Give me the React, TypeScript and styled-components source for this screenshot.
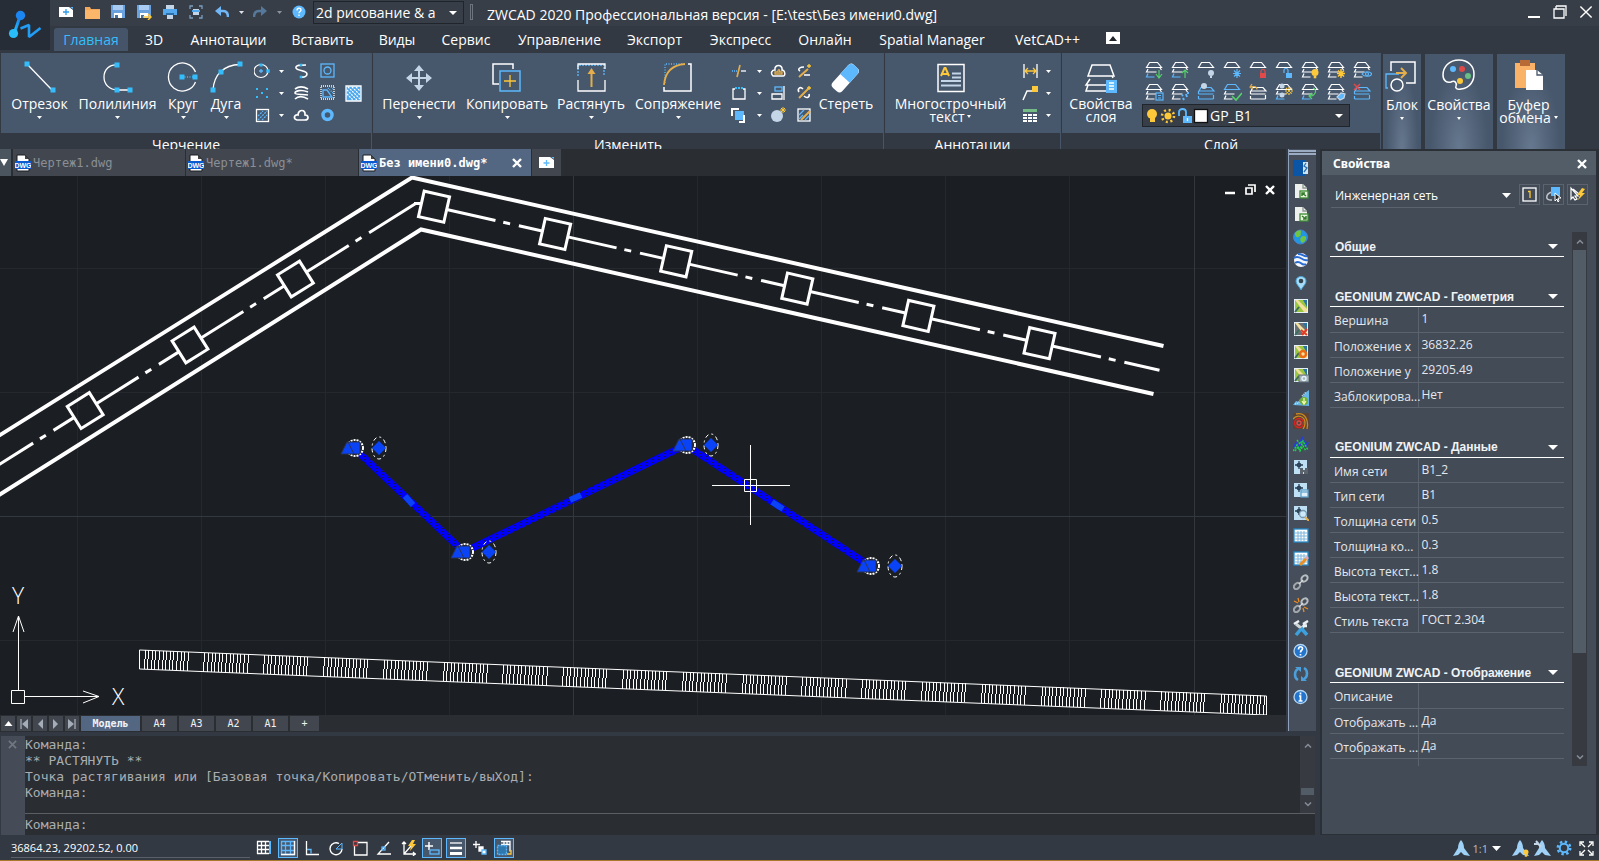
import React from "react";
import styled, { createGlobalStyle, css } from "styled-components";

const W = "#ffffff";
const B = "#5db8fd";
const C = "#35bdfb";
const Y = "#fdc83a";
const O = "#e3ae4b";
const L = "#c5d5e8";
const R = "#e24a4a";
const G = "#55d06a";
const ui = `"Open Sans", "Noto Sans", sans-serif`;
const mono = `"DejaVu Sans Mono", "Liberation Mono", monospace`;

const GlobalStyle = createGlobalStyle`
  * { box-sizing: border-box; }
  html, body { margin: 0; background: #323943; }
  body { font-family: ${ui}; font-size: 14px; color: #fff; }
  button, select, input { font: inherit; color: inherit; border: 0; margin: 0; padding: 0; background: none; border-radius: 0; }
  select { appearance: none; }
  svg { display: block; flex: none; }
`;

const Shell = styled.div`
  height: 100vh;
  min-height: 600px;
  display: flex;
  flex-direction: column;
  overflow: hidden;
  background: #323943;
`;

/* ---------- header ---------- */
const Header = styled.header`
  display: flex;
  flex: none;
  height: 53px;
`;
const Logo = styled.div`
  width: 50px;
  height: 50px;
  background: #272d37;
`;
const HeaderRows = styled.div`
  flex: 1;
  min-width: 0;
`;
const TitleRow = styled.div`
  display: flex;
  align-items: flex-start;
  height: 26px;
  padding-left: 3px;
  background: #373e48;
`;
const QuickButton = styled.button<{ $w?: number }>`
  width: ${(p) => p.$w ?? 26}px;
  height: 24px;
  flex: none;
  display: flex;
  align-items: center;
  justify-content: center;
`;
const Combo = styled.div<{ $w: number; $ml?: number }>`
  display: flex;
  align-items: center;
  width: ${(p) => p.$w}px;
  height: 23px;
  flex: none;
  margin: 1px 0 0 ${(p) => p.$ml ?? 0}px;
  padding: 0 6px 0 2px;
  background: #373e47;
  border: 1px solid #20252b;
  select { flex: 1; min-width: 0; height: 20px; outline: 0; }
`;
const Divider = styled.span`
  width: 3px;
  height: 16px;
  margin: 4px 14px 0 6px;
  border: 1px solid #6d747d;
`;
const WindowTitle = styled.h1`
  flex: 1;
  margin: 0;
  padding-top: 5px;
  font-size: 14px;
  font-weight: 400;
  line-height: 20px;
  white-space: nowrap;
`;
const MenuRow = styled.nav`
  display: flex;
  height: 27px;
  padding: 2px 0 0 4px;
`;
const MenuTab = styled.button<{ $w: number; $on?: boolean }>`
  width: ${(p) => p.$w}px;
  height: 23px;
  padding-top: 1px;
  border-radius: 3px 3px 0 0;
  line-height: 22px;
  white-space: nowrap;
  ${(p) => p.$on && css`background: #455468; color: ${C};`}
`;
const CollapseButton = styled.button`
  width: 14px;
  height: 12px;
  margin: 4px 0 0 10px;
  background: #fff;
  display: flex;
  align-items: center;
  justify-content: center;
`;

/* ---------- ribbon ---------- */
const Ribbon = styled.div`
  display: flex;
  gap: 1px;
  height: 96px;
  flex: none;
  padding-left: 1px;
`;
const Group = styled.section<{ $w: number }>`
  width: ${(p) => p.$w}px;
  flex: none;
  border-right: 1px solid #475569;
`;
const GroupBody = styled.div`
  display: flex;
  height: 80px;
  background: #47576c;
`;
const GroupTitle = styled.h2`
  height: 16px;
  margin: 0;
  padding-top: 3px;
  overflow: hidden;
  font-size: 14px;
  font-weight: 400;
  line-height: 18px;
  text-align: center;
`;
const Tool = styled.button<{ $w: number }>`
  width: ${(p) => p.$w}px;
  height: 72px;
  flex: none;
  display: flex;
  flex-direction: column;
  align-items: center;
  padding-top: 8px;
  line-height: 13px;
  white-space: nowrap;
  svg + span { margin-top: 2px; }
  span + svg { margin-top: 6px; }
`;
const ToolText = styled.span`
  display: flex;
  flex-direction: column;
  align-items: center;
  font-size: 14px;
  line-height: 13px;
`;
const WithArrow = styled.span`
  display: flex;
  align-items: center;
  gap: 3px;
`;
const SmallGrid = styled.div<{ $cols: string; $ml?: number }>`
  display: grid;
  grid-template-columns: ${(p) => p.$cols};
  grid-auto-rows: 22px;
  align-content: start;
  padding-top: 7px;
  margin-left: ${(p) => p.$ml ?? 0}px;
`;
const Small = styled.button`
  display: flex;
  align-items: center;
  justify-content: center;
`;
const LayerBox = styled.div`
  display: flex;
  flex-direction: column;
`;
const LayerGrid = styled.div`
  display: grid;
  grid-template-columns: repeat(9, 26px);
  grid-auto-rows: 22px;
  padding: 6px 0 0 1px;
`;
const TallTool = styled.button<{ $w: number; $pr?: number }>`
  width: ${(p) => p.$w}px;
  height: 95px;
  flex: none;
  margin: 1px 2px 0 1px;
  padding: 5px ${(p) => p.$pr ?? 0}px 0 0;
  display: flex;
  flex-direction: column;
  align-items: center;
  white-space: nowrap;
  background: radial-gradient(ellipse at 50% 100%, #66788f 0, #47576c 60%);
  svg + span { margin-top: 5px; }
  span + svg { margin-top: 6px; }
`;

/* ---------- work area ---------- */
const Main = styled.main`
  display: flex;
  flex: 1;
  min-height: 0;
`;
const Left = styled.div`
  flex: 1;
  min-width: 0;
  display: flex;
  flex-direction: column;
`;
const WorkRow = styled.div`
  flex: 1;
  min-height: 0;
  display: flex;
`;
const DocColumn = styled.div`
  flex: 1;
  min-width: 0;
  display: flex;
  flex-direction: column;
  background: #2a2d31;
`;
const DocTabs = styled.div`
  display: flex;
  gap: 1px;
  height: 27px;
  flex: none;
  font-family: ${mono};
  font-size: 12px;
`;
const TabMenu = styled.button`
  width: 11px;
  margin-right: 1px;
  background: #4b5560;
  display: flex;
  align-items: center;
`;
const DocTab = styled.button<{ $on?: boolean }>`
  width: 172px;
  display: flex;
  align-items: center;
  gap: 2px;
  padding: 1px 9px 0 2px;
  background: ${(p) => (p.$on ? "#536782" : "#42474f")};
  color: ${(p) => (p.$on ? "#fff" : "#8b8f95")};
  font-weight: ${(p) => (p.$on ? 700 : 400)};
  span { flex: 1; text-align: left; white-space: nowrap; }
`;
const NewTab = styled.button`
  width: 29px;
  background: #42474f;
  display: flex;
  align-items: center;
  justify-content: center;
`;
const Canvas = styled.div`
  flex: 1;
  min-height: 0;
  position: relative;
  background: #1b1e22;
  overflow: hidden;
  > svg { width: 100%; height: 100%; }
`;
const CanvasControls = styled.div`
  position: absolute;
  top: 8px;
  right: 10px;
  display: flex;
  gap: 9px;
  button { width: 11px; height: 11px; }
`;
const LayoutTabs = styled.div`
  display: flex;
  gap: 2px;
  height: 17px;
  flex: none;
  padding: 1px 0 1px 1px;
  font-family: ${mono};
  font-size: 10px;
  color: #f0f3f6;
`;
const LayoutTab = styled.button<{ $w: number; $on?: boolean }>`
  width: ${(p) => p.$w}px;
  background: ${(p) => (p.$on ? "#536782" : "#42474f")};
  font-weight: ${(p) => (p.$on ? 700 : 400)};
  line-height: 15px;
  display: flex;
  align-items: center;
  justify-content: center;
`;

const SideBar = styled.div`
  width: 28px;
  margin: 0 0 1px 2px;
  flex: none;
  background: #454e5a;
  border-left: 1px solid #8fa0b8;
  padding-top: 1px;
  display: flex;
  flex-direction: column;
`;
const Grip = styled.span`
  height: 2px;
  flex: none;
  margin-bottom: 1px;
  background: #9aabc3;
`;
const SideButton = styled.button`
  height: 23px;
  flex: none;
  padding-right: 3px;
  display: flex;
  align-items: center;
  justify-content: center;
`;

/* ---------- command line ---------- */
const Command = styled.section`
  display: flex;
  flex: none;
  height: 99px;
  margin: 4px 1px 0 1px;
  background: #2a2d31;
  font-family: ${mono};
  font-size: 13px;
  color: #a9adb2;
`;
const CommandGrip = styled.div`
  width: 24px;
  background: #454b57;
  padding: 4px 7px;
`;
const CommandBody = styled.div`
  flex: 1;
  min-width: 0;
  display: flex;
  flex-direction: column;
`;
const History = styled.div`
  display: flex;
  height: 78px;
  border-bottom: 1px solid #5b5f64;
`;
const Log = styled.div`
  flex: 1;
  padding-top: 1px;
  line-height: 16px;
  p { margin: 0; white-space: pre; }
`;
const Prompt = styled.label`
  display: flex;
  align-items: center;
  height: 21px;
  input { flex: 1; height: 18px; outline: 0; }
`;
const Scroll = styled.div<{ $w: number }>`
  width: ${(p) => p.$w}px;
  flex: none;
  background: #373b41;
  display: flex;
  flex-direction: column;
  align-items: center;
  padding: 0 1px;
`;
const ScrollButton = styled.button`
  height: 18px;
  flex: none;
`;
const Track = styled.div<{ $before: number; $size: number }>`
  flex: 1;
  width: 100%;
  display: flex;
  flex-direction: column;
  &::before { content: ""; flex: ${(p) => p.$before}; }
  &::after { content: ""; flex: ${(p) => 100 - p.$before - p.$size}; }
  i { flex: ${(p) => p.$size}; background: #525c66; }
`;

/* ---------- properties ---------- */
const Props = styled.aside`
  width: 279px;
  flex: none;
  margin-left: 4px;
  padding: 2px 3px 1px 2px;
  background: #2b2f36;
  display: flex;
  flex-direction: column;
`;
const PropsHead = styled.div`
  display: flex;
  align-items: center;
  justify-content: space-between;
  height: 24px;
  flex: none;
  padding: 1px 9px 0 11px;
  background: #525d68;
  h2 { margin: 0; font: 700 12px/18px "Noto Sans", sans-serif; }
`;
const PropsBody = styled.div`
  flex: 1;
  min-height: 0;
  background: #434b57;
`;
const ObjectRow = styled.div`
  display: flex;
  gap: 3px;
  padding: 9px 8px 0 9px;
`;
const ObjectSelect = styled.div`
  flex: 1;
  margin-right: 1px;
  height: 24px;
  display: flex;
  align-items: center;
  padding: 0 4px;
  border-bottom: 1px solid #5a636e;
  font-size: 12px;
  select { flex: 1; outline: 0; height: 22px; }
`;
const ObjectButton = styled.button`
  width: 21px;
  height: 21px;
  border: 1px solid #5a636e;
  display: flex;
  align-items: center;
  justify-content: center;
`;
const PropsList = styled.div`
  display: flex;
  height: 534px;
  margin: 24px 9px 0 8px;
  overflow: hidden;
`;
const Sections = styled.div`
  flex: 1;
  min-width: 0;
  overflow: hidden;
  padding-right: 8px;
`;
const SectionHead = styled.button`
  width: 100%;
  height: 25px;
  display: flex;
  align-items: center;
  justify-content: space-between;
  padding: 5px 6px 0 5px;
  border-bottom: 1px solid #fff;
  font: 700 12px/18px "Liberation Sans", Arial, sans-serif;
  color: #f0f3f6;
  table + & { margin-top: 25px; }
`;
const SectionGap = styled.div`
  height: 25px;
`;
const Table = styled.table`
  width: 100%;
  border-collapse: collapse;
  table-layout: fixed;
  font-size: 12px;
  color: #e3e8ee;
  th, td {
    height: 25px;
    border-bottom: 1px solid #5a636e;
    font-weight: 400;
    line-height: 18px;
    text-align: left;
    white-space: nowrap;
  }
  th { width: 88px; padding: 4px 0 0 4px; border-right: 1px solid #5a636e; }
  td { padding: 0 0 0 3px; }
`;

/* ---------- status bar ---------- */
const Status = styled.footer`
  display: flex;
  align-items: center;
  height: 26px;
  flex: none;
  border-bottom: 1px solid #a8792b;
  padding: 1px 2px 0 11px;
`;
const Coords = styled.div`
  width: 239px;
  height: 20px;
  border-bottom: 1px solid #59606a;
  font-size: 11px;
  line-height: 20px;
`;
const Toggles = styled.div`
  display: flex;
  flex: 1;
  gap: 4px;
  padding-left: 4px;
`;
const Toggle = styled.button<{ $on?: boolean }>`
  width: 20px;
  height: 20px;
  display: flex;
  align-items: center;
  justify-content: center;
  ${(p) => p.$on && css`background: #47576c; border: 1px solid ${B};`}
`;
const StatusTools = styled.div`
  display: flex;
  align-items: center;
`;
const StatusButton = styled.button<{ $w: number }>`
  width: ${(p) => p.$w}px;
  display: flex;
  align-items: center;
  justify-content: center;
`;
const ScaleButton = styled.button`
  display: flex;
  align-items: center;
  gap: 4px;
  margin: 0 8px 0 0;
  font-size: 11px;
  color: #b8bdc4;
`;

/* ---------- drawings ---------- */
type SvgProps = { s?: number; w?: number; h?: number; children: React.ReactNode };
const I = ({ s = 16, w, h, children }: SvgProps) => (
  <svg width={w ?? s} height={h ?? s} viewBox={`0 0 ${w ?? s} ${h ?? s}`} fill="none" stroke={W} strokeWidth={1.3} aria-hidden="true">
    {children}
  </svg>
);
const F = ({ d, c, x }: { d: string; c: string; x?: string }) => <path d={d} fill={c} stroke={x ?? "none"} />;
const Dot = ({ x, y, r = 2.5, c = C }: { x: number; y: number; r?: number; c?: string }) => (
  <rect x={x - r} y={y - r} width={r * 2} height={r * 2} fill={c} stroke="none" />
);
const Down = ({ w = 5, h = 3, c = W }: { w?: number; h?: number; c?: string }) => (
  <svg width={w} height={h} viewBox="0 0 10 6" preserveAspectRatio="none" aria-hidden="true"><path d="M0 0h10L5 6z" fill={c} /></svg>
);
const Cross = ({ s = 9, c = W, w = 2 }: { s?: number; c?: string; w?: number }) => (
  <svg width={s} height={s} viewBox="0 0 10 10" aria-hidden="true"><path d="M1 1l8 8M9 1l-8 8" stroke={c} strokeWidth={w} /></svg>
);
const Chevron = ({ up }: { up?: boolean }) => (
  <svg width={8} height={5} viewBox="0 0 8 5" aria-hidden="true"><path d={up ? "M1 4.5l3-3 3 3" : "M1 .5l3 3 3-3"} stroke="#858d96" strokeWidth="1.5" fill="none" /></svg>
);

const LogoMark = () => (
  <svg width="50" height="50" viewBox="0 0 50 50" aria-label="ZWCAD">
    <defs>
      <linearGradient id="lg" x1="0" y1="1" x2="1" y2="0"><stop offset="0" stopColor="#2bc4fb" /><stop offset="1" stopColor="#1377e8" /></linearGradient>
    </defs>
    <path d="M14 34L20.500 15" stroke="url(#lg)" strokeWidth="3" />
    <circle cx="20.500" cy="15.500" r="4.700" fill="#1b86f2" />
    <circle cx="13.500" cy="33.500" r="4.600" fill="#29bdfa" />
    <path d="M20.500 28.500L29 25L29 37L40.500 28" fill="none" stroke="#219df6" strokeWidth="2.600" strokeLinejoin="bevel" />
  </svg>
);

const Floppy = ({ arrow }: { arrow?: boolean }) => (
  <I s={16}>
    <F d="M1 1h14v13H1z" c="#6aa2e0" /><F d="M3 1h10v5H3z" c="#a9cbf2" /><F d="M4 9h8v5H4z" c={W} /><F d="M5 11h3v3H5z" c="#44719f" />
    {arrow && <path d="M7 13h7M12 10l3 3-3 3" stroke={Y} strokeWidth="1.500" />}
  </I>
);
const quick: [string, React.ReactNode, number?][] = [
  ["Создать", <I w={14} h={10}><F d="M0 0h10l4 3v7H0z" c={W} /><F d="M11 0h3v2z" c={B} /><path d="M7 2v6M4 5h6" stroke="#2f9be8" /></I>],
  ["Открыть", <I w={15} h={13}><F d="M0 1h5l1 2h9v10H0z" c="#f3a75c" /><F d="M0 4h15v9H0z" c="#fbb669" /></I>],
  ["Сохранить", <Floppy />],
  ["Сохранить как", <Floppy arrow />],
  ["Печать", <I s={14}><F d="M3 0h8v4H3zM4 9h6v5H4z" c={L} /><F d="M0 4h14v6H0z" c="#55a9ee" /><F d="M3 8h8v2H3z" c="#2b6ea8" /></I>],
  ["Просмотр", <I s={14}><path d="M1 4V1h3M10 1h3v3M13 10v3h-3M4 13H1v-3" stroke="#7b9dbd" /><F d="M4 4h6v6H4z" c={L} /><F d="M3 5h8v2H3z" c="#55a9ee" /></I>],
  ["Отменить", <I w={14} h={12}><path d="M3 5h5c3 0 5 2 5 6" stroke="#72b7f5" strokeWidth="2.500" /><F d="M0 5l6-5v10z" c="#72b7f5" /></I>],
  ["Список отмен", <Down w={5} h={3} c="#dfe4ea" />, 12],
  ["Вернуть", <I w={14} h={12}><path d="M11 5H6c-3 0-5 2-5 6" stroke="#56789b" strokeWidth="2.500" /><F d="M14 5L8 0v10z" c="#56789b" /></I>],
  ["Список возвратов", <Down w={5} h={3} c="#8b939c" />, 12],
  ["Справка", <svg width="14" height="14" viewBox="0 0 14 14" aria-hidden="true"><circle cx="7" cy="7" r="6.500" fill={B} /><path d="M5 5.500c0-3 4-3 4-.5 0 1.500-2 1.500-2 3.200M7 9.500v1.500" stroke={W} strokeWidth="1.300" fill="none" /></svg>, 28],
];

const menus: [string, number][] = [
  ["Главная", 74], ["3D", 52], ["Аннотации", 97], ["Вставить", 91], ["Виды", 58], ["Сервис", 80], ["Управление", 107],
  ["Экспорт", 83], ["Экспресс", 89], ["Онлайн", 80], ["Spatial Manager", 134], ["VetCAD++", 97],
];

const icoLine = <I s={34}><path d="M4 3L29 29" stroke={W} strokeWidth="1.300" /><Dot x={4} y={3} /><Dot x={30} y={29} /></I>;
const icoPoly = <I s={34}><path d="M17 4C8 3 3 9 3 16s5 13 14 13h12" /><Dot x={16} y={4} /><Dot x={16} y={29} /><Dot x={29} y={29} /></I>;
const icoCircle = <I s={34}><path d="M29.500 11A14 14 0 1 0 29.500 21" /><path d="M16 16h13" stroke={C} strokeDasharray="1 1.500" /><Dot x={16} y={16} /><Dot x={29} y={16} /></I>;
const icoArc = <I s={34}><path d="M4 29C5 14 14 4 31 3.500" /><Dot x={4} y={29} /><Dot x={12} y={11} /><Dot x={31} y={3} /></I>;
const icoMove = <I s={34}><path d="M17 6v22M6 17h22" stroke={L} strokeWidth="2" /><F d="M17 4l5 6H12zM17 30l5-6H12zM4 17l6-5v10zM30 17l-6-5v10z" c={L} /></I>;
const icoCopy = <I s={34}><path d="M9 23H3V3h20v5" strokeWidth="1.500" /><rect x="10" y="10" width="20" height="20" stroke={B} strokeWidth="1.500" /><path d="M20 14v12M14 20h12" stroke={Y} /></I>;
const icoStretch = <I s={34}><path d="M4 15V4h26v11" stroke={B} strokeDasharray="2 1" /><path d="M4 8V3h27v5M4 19v11h27V19" /><path d="M17.500 26V11" stroke={O} strokeWidth="2" /><F d="M17.500 7l4 6h-8z" c={O} /></I>;
const icoFillet = <I s={34}><path d="M4 22V3h17" stroke={B} strokeDasharray="1 1.500" /><path d="M27 3h3v27H3v-4" strokeWidth="1.500" /><path d="M3 24C4 12 10 4 24 3" stroke={O} strokeWidth="1.800" /></I>;
const icoErase = <I s={34}><g transform="rotate(42 17 17)" stroke="none"><rect x="10" y="2" width="13" height="31" rx="4" fill={W} /><path d="M10 18V6c0-2 2-4 4-4h5c2 0 4 2 4 4v12z" fill={B} /></g></I>;
const icoMtext = <svg width="34" height="34" viewBox="0 0 34 34" fill="none" aria-hidden="true"><path d="M4 3.500h26v27H4z" stroke={W} strokeWidth="1.500" /><path d="M7 15L10.500 7h1L15 15M8.500 13h5" stroke={Y} strokeWidth="2" /><path d="M18 12.500h9M18 16.500h9M7 20h20M7 24.500h20" stroke={L} strokeWidth="2" /></svg>;
const icoLayerProps = <I s={34}><path d="M8 4h18l4 11H4zM6 18l-4 6h20M4 24l-2 6h20M28 15l1 2" strokeWidth="1.500" /><F d="M22 19h11v13H22z" c={B} /><path d="M25 22h5M25 25h5M25 28h5" /></I>;
const icoBlock = <I s={34}><path d="M6 12V3h24v21h-9" strokeWidth="1.500" /><path d="M3 29H1V15h13" stroke={B} /><circle cx="12" cy="26" r="6" strokeWidth="1.500" /><path d="M11 14h9M16 9l5 5-5 5" stroke={O} strokeWidth="2" /></I>;
const icoPalette = <I s={34}><path d="M17 2C7 2 1 9 1 17c0 6 4 8 8 7 4-2 6 1 5 4-1 2 1 4 5 3 9-1 13-8 13-15C32 8 26 2 17 2z" strokeWidth="1.500" transform="translate(0 -1)" /><circle cx="11" cy="10" r="3" fill={B} stroke="none" /><circle cx="20" cy="10" r="3" fill={R} stroke="none" /><circle cx="26" cy="17" r="3" fill="#6abf83" stroke="none" /><circle cx="18" cy="22" r="3" fill={Y} stroke="none" /></I>;
const icoPaste = <I s={34}><F d="M3 4h20v25H3z" c="#f9b267" /><F d="M8 1h10v6H8z" c="#b76936" /><F d="M14 11h11l6 5v15H14z" c={W} /><path d="M25 11v5h6" stroke="#47576c" /></I>;

const drawSmall: (React.ReactNode | null)[] = [
  <I><ellipse cx="7" cy="8" rx="7" ry="6.500" strokeWidth="1.200" /><Dot x={7} y={2} r={1.5} /><Dot x={14} y={8} r={1.7} /><path d="M5 8h4M7 6v4" stroke={B} /></I>,
  "v",
  <I><path d="M13 2C8 2 2 2 3 5s11 2 11 6-5 3-7 3" strokeWidth="1.600" /><Dot x={8} y={2} r={1.3} /><Dot x={8} y={14} r={1.3} /></I>,
  <I><rect x="2" y="1" width="13" height="13" stroke={B} /><circle cx="8.500" cy="7.500" r="3.500" stroke={B} /></I>,
  null,
  <I><Dot x={3} y={4} r={1} /><Dot x={13} y={4} r={1} /><Dot x={8} y={8} r={1} /><Dot x={3} y={12} r={1} /><Dot x={13} y={12} r={1} /></I>,
  "v",
  <I><path d="M2 4c4-3 8-3 13 0M15 7C8 4 2 6 2 8s8 1 13 2M2 14c4-4 8-3 13 0" strokeWidth="1.600" /></I>,
  <I><rect x="2" y="1" width="13" height="13" strokeDasharray="1 1" /><path d="M4 12V5h4l5 7z" stroke={B} /><path d="M9 3l5 5M12 2l2 2" stroke={B} strokeDasharray="1 1" /></I>,
  <I s={17}><path d="M1 1h15v15H1z" fill="#4da9ef" /><path d="M2 9l6 6M2 5l10 10M3 2l12 12M7 2l8 8M11 2l4 4" strokeWidth="1.200" strokeDasharray="2 1" /></I>,
  <I><rect x="2.500" y="2.500" width="12" height="12" /><path d="M4 9l5-5M4 13l9-9M8 13l5-5" stroke={B} strokeDasharray="2 1" /></I>,
  "v",
  <I><path d="M4 13c-4-1-3-6 1-5 0-6 8-6 7 0 4 0 4 5 0 5z" strokeWidth="1.700" /></I>,
  <I><circle cx="8.500" cy="8" r="4.500" stroke={B} strokeWidth="3.500" /></I>,
  null,
];
const editSmall: (React.ReactNode | null)[] = [
  <I><path d="M9 2L6 14" stroke={O} strokeWidth="1.700" /><path d="M1 8h5" stroke={B} strokeDasharray="1 1" /><path d="M10 8h5" /></I>,
  "v",
  <I><path d="M3 13c-3-3-1-6 2-6-1-6 8-6 7 0 3 0 4 6 1 6z" strokeWidth="1.500" /><path d="M5 11h7V9H9.500c1-3-2-3-1.500 0H5z" stroke={O} /></I>,
  <I><path d="M8 4C4 4 1 6 4 8M8 12h6" strokeWidth="1.600" /><path d="M3 14l9-8" stroke={O} strokeWidth="2" /><path d="M13 1v4M11 3h4" stroke={Y} /></I>,
  <I><path d="M4 4H2v10h12V4h-2" /><path d="M4 3h9" stroke={C} strokeWidth="2" strokeDasharray="2 1" /></I>,
  "v",
  <I><path d="M14 1v14M2 9h10v5H2z" /><rect x="5" y="2" width="7" height="4" stroke={B} /></I>,
  <I><path d="M7 4C4 1 1 4 3 7M8 11c3 3 6 1 5-2" strokeWidth="1.600" /><path d="M3 13l9-9" stroke={O} strokeWidth="2" /><path d="M13 1v4M11 3h4" stroke={Y} /></I>,
  <I s={17}><F d="M5 4h9v9H5z" c={B} /><path d="M2 9V2h7M14 8v7h-5" strokeWidth="2" /></I>,
  "v",
  <I><circle cx="7" cy="9" r="6" fill={L} stroke="none" /><path d="M13 0v6M10 3h6M11 1l4 4M15 1l-4 4" stroke={Y} strokeWidth="1" /></I>,
  <I><rect x="2" y="2" width="12" height="12" /><path d="M3 8l5-5M3 12l4-4M9 13l4-4" stroke={B} /><path d="M5 13l9-9" stroke={O} strokeWidth="2" /></I>,
];
const annoSmall: React.ReactNode[] = [
  <I><path d="M2 1v14M15 1v14" /><path d="M3 8h11M6 5L3 8l3 3M11 5l3 3-3 3" stroke={Y} /></I>,
  "v",
  <I><path d="M1 15l4-9h6" strokeWidth="1.500" /><F d="M10 1h6v6h-6z" c={Y} /></I>,
  "v",
  <I><F d="M1 2h14v3H1z" c="#74bb85" /><path d="M1 8h14M1 11h14M1 14h14" strokeWidth="2" strokeDasharray="4 1" /></I>,
  "v",
];

const badges: React.ReactNode[] = [
  <path d="M14 9v8M11 13l3 4 3-4" stroke={G} />,
  <path d="M14 17V9M11 12l3-3 3 3" stroke={G} />,
  <><circle cx="14" cy="12" r="3" fill={L} stroke="none" /><Dot x={14} y={16} r={1} c={L} /></>,
  <path d="M14 8v9M10 12.500h8M11 9.500l6 6M17 9.500l-6 6" stroke={B} />,
  <><path d="M12 12v-2c0-2 4-2 4 0v2" stroke={R} /><F d="M11 12h6v5h-6z" c={R} /></>,
  <><path d="M9 12V9c0-2 4-2 4 0v3" stroke={B} /><F d="M11 12h6v5h-6z" c={B} /></>,
  <><circle cx="14" cy="11.500" r="3.500" fill={Y} stroke="none" /><Dot x={14} y={16} r={1.3} c={Y} /></>,
  <path d="M14 8v9M10 12.500h8M11 9.500l6 6M17 9.500l-6 6" stroke={Y} strokeWidth="1.500" />,
  <><path d="M9 13c2-3 8-3 10 0-2 3-8 3-10 0z" stroke={B} /><circle cx="14" cy="13" r="1.500" stroke={B} /></>,
  <><rect x="11" y="10" width="7" height="7" fill="#47576c" stroke={B} /><path d="M13 12.500h3M13 15h3" stroke={B} /></>,
  <path d="M12 15l1 2M15 11l1 3M11 12l1 1M17 9v2" stroke={B} strokeWidth="2" />,
  <circle cx="7" cy="3" r="3" fill={L} stroke="none" />,
  <path d="M9 13l4 4 6-7" stroke={G} strokeWidth="1.700" />,
  <path d="M3 1L1 4l3 2M2 3.500h3c2 0 3 1 3 3" stroke={O} />,
  <><circle cx="7" cy="3" r="2.500" fill={L} stroke="none" /><circle cx="7" cy="12" r="2.500" fill={L} stroke="none" /><path d="M14 4v9M10 8h8M11 5l6 6M17 5l-6 6" stroke={Y} strokeDasharray="2 1" /></>,
  <path d="M12 5c5 2 2 8-3 8M11 10l-3 3 3 3" stroke={G} />,
  <path d="M10 14l4-4 4 1-1 4-4 2z" fill={B} stroke={L} />,
  <path d="M1 1l6 6M7 1L1 7" stroke={R} strokeWidth="1.500" />,
];
const LayerIcon = ({ i }: { i: number }) => {
  const partial = i >= 2 && i <= 5;
  const low = i === 11 || i === 13 || i === 17;
  const bottom = i === 0 || i === 1 || i === 14 || i === 15 ? B : W;
  return (
    <svg width="19" height="19" viewBox="0 0 19 19" fill="none" stroke={W} strokeWidth="1.200" aria-hidden="true">
      {low ? (
        <path d="M4 4.500h10l3 3.500H2zM1.500 11h15M1.500 8v3M1.500 16h15M1.500 13v3M16.500 12v4" stroke={i === 11 || i === 17 ? B : W} />
      ) : (
        <path d="M4.500 1.500h8l4 5h-15z" stroke={i === 12 ? B : W} />
      )}
      {!partial && !low && <><path d="M3 8l-1.500 3h10" /><path d="M3 12.500l-1.500 3.500h8" stroke={bottom} /></>}
      {(i === 0 || i === 1 || i === 9 || i === 10 || i === 6 || i === 7 || i === 8 || i === 16) && <path d="M15 7l1.500 2" />}
      {badges[i]}
    </svg>
  );
};

/* map tile used by several side bar commands */
const MapTile = ({ c = "#9bc63f", children }: { c?: string; children?: React.ReactNode }) => (
  <I><rect x="1" y="1" width="14" height="14" fill="#e5f0f7" stroke="none" /><F d="M2 2h12v12H2z" c={c} /><F d="M2 2h3l9 9v3h-3z" c="#f2dfa0" /><path d="M2 14l4-5" stroke="#3c6d62" strokeWidth="2" /><F d="M10 2h4v7z" c="#2b75a3" />{children}</I>
);
const NavTile = ({ children }: { children: React.ReactNode }) => (
  <I><F d="M1 1h13v14H1z" c="#bfe0f4" /><path d="M6 2v8M2 6h8" stroke="#283f55" /><circle cx="6" cy="6" r="1.700" stroke="#283f55" />{children}</I>
);
const Sheet = ({ flip }: { flip?: boolean }) => (
  <I><F d="M2 1h8l4 4v10H2z" c="#eef0ee" /><path d="M10 1v4h4" stroke="#8a9490" /><rect x="7" y="8" width="8" height="7" fill="#e8f3e0" stroke="#3c8b33" /><path d={flip ? "M9 10l4 3M13 10v3h-3" : "M13 13L9 10M9 13v-3h3"} stroke="#347c2b" strokeWidth="1.500" /></I>
);
const GridSheet = ({ pen }: { pen?: boolean }) => (
  <I><rect x="1" y="1" width="14" height="13" fill={W} stroke="#2388c8" /><path d="M2 5h12M2 8h12M2 11h12M5 3v10M8 3v10M11 3v10" stroke="#7db4da" strokeWidth="1" />{pen && <><path d="M7 14l7-7" stroke="#e89024" strokeWidth="3" /><path d="M13 8l2-2" stroke="#e0a6b6" strokeWidth="3" /></>}</I>
);
const Chain = ({ broken }: { broken?: boolean }) => (
  <I><ellipse cx="11.500" cy="4.500" rx="3.500" ry="2.700" transform="rotate(-45 11.500 4.500)" stroke="#b8bdc0" strokeWidth="2" /><ellipse cx="4" cy="12" rx="3.500" ry="2.500" transform="rotate(-45 4 12)" stroke="#a2a7ab" strokeWidth="2" /><path d="M6 10l4-4" stroke="#d7dadd" />{broken && <path d="M1 4l4 2M5 1l1 4M10 11l1 4M11 10l4 2" stroke="#f08c1e" />}</I>
);
const Badge = ({ d }: { d: string }) => (
  <I><circle cx="7.500" cy="8" r="6.500" fill="#2374cc" stroke="#b5d6f2" /><path d={d} strokeWidth="1.700" /></I>
);
const side: React.ReactNode[] = [
  <I><F d="M0 0h12v16H0z" c="#0a55a5" /><F d="M10 2h5v12h-5z" c="#cfe6f7" /><path d="M13 3l-2 3 3 2-3 4" stroke="#2b6fae" /></I>,
  <Sheet />,
  <Sheet flip />,
  <I><circle cx="7.500" cy="8" r="7" fill="#2196e3" stroke="#4a80c8" strokeWidth="1" /><F d="M2 4c3-4 7-3 6-1s1 2-1 4-5 2-5-3zM8 8c3-2 6-1 5 2s-4 5-5 3-1-3 0-5z" c="#6fc541" /></I>,
  <I><circle cx="8" cy="8" r="7" fill="#f4f8fc" stroke="none" /><path d="M1 6c6-4 8 4 14 2M2 11c6-4 6 4 11 1M5 2c5 0 6 3 9 2" stroke="#2a6bd0" strokeWidth="2" /></I>,
  <I><path d="M8 15C5 10 3 9 3 6c0-6 10-6 10 0 0 3-2 4-5 9z" fill="#a6dcf8" stroke="#4a9fd0" strokeWidth="1" /><circle cx="8" cy="6" r="2.300" fill="#35444f" stroke="none" /></I>,
  <MapTile />,
  <MapTile c="#6d7072"><path d="M8 9l6 5M14 8l-5 6" stroke="#e23b2b" strokeWidth="2" /></MapTile>,
  <MapTile><circle cx="10" cy="10" r="3" stroke="#f06a16" strokeWidth="2.500" /></MapTile>,
  <MapTile><rect x="6" y="8" width="10" height="7" fill="#a5b3bd" stroke="#5f6d77" strokeWidth="1" /><circle cx="11" cy="11.500" r="2" stroke="#e6f3fb" /></MapTile>,
  <I><F d="M0 15l3-4 3 1 6-9 4-3v16z" c="#66b5e6" /><path d="M2 14l3-1 3-4M9 6l4-4" stroke="#cfe9f8" strokeDasharray="1 1" /><circle cx="11" cy="11" r="4" fill="#6fb036" stroke="none" /><path d="M11 8v6M9 11l2 3 2-3" stroke="#f3f8b6" /></I>,
  <I><F d="M0 0h16v16H0z" c="#5b4437" /><circle cx="6" cy="10" r="2" stroke={R} /><circle cx="6" cy="10" r="4.500" stroke="#d22" /><path d="M0 6C4 1 12 3 12 10c0 3-1 5-2 6M3 1c9-2 13 6 11 15" stroke="#c98b1f" /></I>,
  <I><path d="M0 13l3-6 3 4 3-9 4 8 2-4" stroke="#2a3cdc" strokeWidth="2" /><path d="M0 15l4-6 3 5 3-9 5 9M4 4l3 4 2-3M2 15l3-4 2 4 3-5 3 5" stroke="#1fd04c" strokeWidth="1.500" strokeDasharray="2 1" /></I>,
  <NavTile><F d="M7 9h3v2h2V9h3v6h-4v-2h-1v2H7z" c="#5b646c" /></NavTile>,
  <NavTile><rect x="8" y="8" width="7" height="7" fill="#dff0fb" stroke="#61a2cc" /><path d="M8 10h7" stroke="#61a2cc" /></NavTile>,
  <NavTile><circle cx="10" cy="9" r="3.500" fill="#cdeafb" stroke="#7898ae" /><path d="M12 12l4 4" stroke={O} strokeWidth="2" /></NavTile>,
  <GridSheet />,
  <GridSheet pen />,
  <Chain />,
  <Chain broken />,
  <I><path d="M3 4l5 4M13 3L9 8" stroke="#cfd4d8" strokeWidth="3" /><path d="M1 4l5-3M10 4l5-3M14 6l-4 0" stroke="#eef1f3" strokeWidth="2.500" /><path d="M8 8l6 7M8 9l-5 6" stroke="#3da0dc" strokeWidth="3.500" /></I>,
  <Badge d="M5.500 6.500c0-3.500 4-3.500 4-1 0 2-2 1.500-2 4M7.500 11v1.500" />,
  <I><path d="M5 14C1 12 1 5 5 3M11 2c4 2 4 9 0 11" stroke="#4ba0dc" strokeWidth="2.500" /><F d="M2 1h6v5zM14 15H8v-5z" c="#4ba0dc" /></I>,
  <Badge d="M7.500 3.500v2M6 7h1.500v5M5.500 12h4" />,
];

const Dwg = () => (
  <svg width="16" height="18" viewBox="0 0 16 18" aria-hidden="true">
    <path d="M2 1h8l4 4v12H2z" fill="#fff" stroke="#1a1c20" />
    <path d="M10 1v4h4" fill="#444" />
    <rect x="0" y="7" width="16" height="8" fill="#0a5ad2" />
    <text x="8" y="14" fontSize="7" fontWeight="700" fontFamily="Liberation Sans, sans-serif" textAnchor="middle" fill="#fff">DWG</text>
  </svg>
);

/* pipeline segment: box at the origin, dash-dot run towards +x */
const Unit = ({ x, y, a, box = true, end = 111 }: { x: number; y: number; a: number; box?: boolean; end?: number }) => (
  <g transform={`translate(${x} ${y}) rotate(${a})`} strokeWidth="3">
    {box && <rect x="-13" y="-13" width="26" height="26" />}
    <path d={`M13 0H63M71 0H78M87 0H${end}`} />
  </g>
);
const Node = ({ x, y }: { x: number; y: number }) => (
  <g>
    <circle cx={x + 1} cy={y} r="8" stroke={W} strokeWidth="2" strokeDasharray="2 1" fill="#1b1e22" />
    <path d={`M${x - 13} ${y + 6}L${x - 7} ${y - 6}H${x + 6}V${y + 6}Z`} fill="#0a43f5" stroke="#2a3350" />
    <path d={`M${x - 6} ${y - 6}L${x} ${y + 6}`} stroke="#2a3350" />
    <ellipse cx={x + 25} cy={y} rx="7" ry="11" stroke={W} strokeDasharray="4 3 2 3" />
    <path d={`M${x + 25} ${y - 7}l7 7-7 7-7-7z`} fill="#0a43f5" stroke="none" />
  </g>
);
const bandTop = (x: number) => 474 + (x - 139) * 0.0405;
const Drawing = () => {
  const hatch: string[] = [];
  for (let k = 0; k < 19; k++) {
    for (let j = 0; j < 13; j++) {
      const x = Math.round(144.5 + k * 59.8 + j * 3.6);
      const t = Math.round(bandTop(x));
      hatch.push(`M${x + 0.5} ${t}v9M${x - 0.5} ${t + 9}v10`);
    }
  }
  return (
    <svg fill="none" stroke={W} aria-label="Чертёж">
      <defs>
        <pattern id="net" width="3" height="3" patternUnits="userSpaceOnUse">
          <rect width="3" height="3" fill="#0000f6" stroke="none" />
          <rect x="1" y="1" width="1" height="1" fill="#12144c" stroke="none" />
        </pattern>
      </defs>
      <g strokeWidth="1" stroke="#25292e">
        <path d="M77.500 0V900M201.500 0V900M325.500 0V900M449.500 0V900M697.500 0V900M821.500 0V900M945.500 0V900M1069.500 0V900" />
        <path d="M0 92.500H3000M0 216.500H3000M0 464.500H3000" />
        <path d="M573.500 0V900M1194.500 0V900M0 340.500H3000" stroke="#32383e" />
      </g>
      <path d="M-4 261.500L412 1.500L1163.500 170" strokeWidth="4" />
      <path d="M-4 321L421 53.500L1153.500 218" strokeWidth="4" />
      <Unit x={-20.2} y={300.6} a={-32.1} />
      <Unit x={85.2} y={234.6} a={-32.1} />
      <Unit x={190} y={169} a={-32.1} />
      <Unit x={295.4} y={103} a={-32.1} end={142} />
      <path d="M414 27.500H421" strokeWidth="3" />
      {[0, 1, 2, 3, 4, 5].map((k) => (
        <Unit key={k} x={434 + k * 121.1} y={30.7 + k * 27.3} a={12.7} end={k === 5 ? 123 : 112} />
      ))}
      <g stroke="url(#net)" strokeWidth="7">
        <path d="M354 272L464 376L686 269L870 390" />
      </g>
      <g stroke="#0a43f5" strokeWidth="6">
        <path d="M405 320l8 9M570 324l11-5M772 326l11 7" />
      </g>
      <Node x={354} y={272} /><Node x={464} y={376} /><Node x={686} y={269} /><Node x={870} y={390} />
      <path d="M750.500 269v80M712 309.500h78M744.500 303.500h12v12h-12z" />
      <path d={`M139.500 474V493L1266.500 539V520Z`} />
      <path d={hatch.join("")} />
      <path d="M11.500 514.500h13v13h-13zM18.500 514V440M13 456l5.500-16 5.500 16M25 520.500h74M83 515l16 5.500-16 6.500" />
      <g fill={W} stroke="none" fontFamily="Open Sans, sans-serif" fontWeight="300" fontSize="23">
        <text x="12" y="428">Y</text>
        <text x="112" y="529">X</text>
      </g>
    </svg>
  );
};

type Row = [string, string];
const geometry: Row[] = [["Вершина", "1"], ["Положение x", "36832.26"], ["Положение y", "29205.49"], ["Заблокирова...", "Нет"]];
const data: Row[] = [["Имя сети", "В1_2"], ["Тип сети", "В1"], ["Толщина сети", "0.5"], ["Толщина ко...", "0.3"], ["Высота текст...", "1.8"], ["Высота текст...", "1.8"], ["Стиль текста", "ГОСТ 2.304"]];
const display: Row[] = [["Описание", ""], ["Отображать ...", "Да"], ["Отображать ...", "Да"], ["", "Нет"]];
const Rows = ({ rows }: { rows: Row[] }) => (
  <Table><tbody>{rows.map(([k, v], i) => <tr key={i}><th scope="row">{k}</th><td>{v}</td></tr>)}</tbody></Table>
);
const Head = ({ children }: { children: string }) => <SectionHead>{children}<Down w={10} h={5} /></SectionHead>;

const toggles: [string, React.ReactNode, boolean?][] = [
  ["Шаг", <I><path d="M1 1.500h12M1 5.500h12M1 9.500h12M1 13.500h12M1.500 1v13M5.500 1v13M9.500 1v13" /><path d="M14 1v13" stroke={B} strokeWidth="2" /></I>],
  ["Сетка", <I><path d="M1 5.500h14M1 10.500h14M5.500 1v14M10.500 1v14M1.500 1.500h13v13h-13z" stroke={B} /><path d="M1 14.500h14M14.500 1v14" /></I>, true],
  ["Орто", <I><path d="M2.500 1v13.500H15" /><path d="M3 9.500h4v4" stroke={B} /></I>],
  ["Полярное отслеживание", <I><path d="M11 3.500A6 6 0 1 0 14 9" strokeWidth="1.400" /><path d="M8 9l6-6v6z" stroke={B} strokeWidth="1" /></I>],
  ["Объектная привязка", <I><path d="M6 2.500h9V15H2.500V6" /><path d="M1.500 1.500h4v4h-4z" stroke={R} /></I>],
  ["Отслеживание", <I><path d="M13 2L2 14h13" /><rect x="6" y="7" width="3" height="3" stroke={B} /></I>],
  ["Динамическая ПСК", <I><path d="M4 2v12h12M4 14l7-8M2 4l2-2 2 2M13 12l2 2-2 2" /><F d="M12 0l-4 6h3l-1 5 6-7h-3l2-4z" c={Y} /></I>],
  ["Динамический ввод", <I><path d="M5 2v8M1 6h8" strokeWidth="1.500" /><rect x="6" y="10" width="9" height="4" stroke={B} /></I>, true],
  ["Вес линий", <I><path d="M2 3h12" /><path d="M2 8h12" strokeWidth="2.500" /><path d="M2 13.500h12" strokeWidth="3" /></I>, true],
  ["Циклический выбор", <I><path d="M4 1v7M1 4.500h7" /><path d="M7 7h4v4H7z" fill={W} /><path d="M10 10h4v4h-4z" stroke={B} fill={W} /></I>],
  ["Прозрачность", <I><path d="M5 1.500h9v10M8 1v4M11 1v4M5 4.500h9" /><rect x="1.500" y="5.500" width="9" height="9" fill="#2f78ad" stroke={B} strokeDasharray="2 1" /><path d="M15 10v4h-4" stroke={Y} /></I>, true],
];
const AnnoMark = ({ children }: { children?: React.ReactNode }) => (
  <I s={17}><F d="M8 0c2 2 3 5 3 8l6 8-6-1-3-3-3 3-5 1 5-8c0-3 1-6 3-8z" c="#9fd2f6" />{children}</I>
);

const label = (t: string, second?: string) => (second
  ? <ToolText><span>{t}</span><WithArrow>{second}<Down w={4} /></WithArrow></ToolText>
  : <ToolText>{t}</ToolText>);
const Smalls = ({ items, cols, ml }: { items: React.ReactNode[]; cols: string; ml?: number }) => (
  <SmallGrid $cols={cols} $ml={ml}>
    {items.map((it, i) => (it === null ? <span key={i} /> : <Small key={i}>{it === "v" ? <Down /> : it}</Small>))}
  </SmallGrid>
);

export default function App() {
  return (
    <Shell>
      <GlobalStyle />
      <Header>
        <Logo><LogoMark /></Logo>
        <HeaderRows>
          <TitleRow>
            {quick.map(([t, ic, w]) => <QuickButton key={t} aria-label={t} $w={w}>{ic}</QuickButton>)}
            <Combo $w={151}>
              <select aria-label="Рабочее пространство"><option>2d рисование &amp; а</option></select>
              <Down w={8} h={4} />
            </Combo>
            <Divider />
            <WindowTitle>ZWCAD 2020 Профессиональная версия - [E:\test\Без имени0.dwg]</WindowTitle>
            <QuickButton aria-label="Свернуть"><I s={14}><path d="M1 12h12" strokeWidth="2" /></I></QuickButton>
            <QuickButton aria-label="Развернуть"><I s={14}><path d="M3 1h10v10M1 4h10v9H1zM3 1v3" /></I></QuickButton>
            <QuickButton aria-label="Закрыть"><Cross s={14} w={1} /></QuickButton>
          </TitleRow>
          <MenuRow>
            {menus.map(([m, w], i) => <MenuTab key={m} $w={w} $on={i === 0}>{m}</MenuTab>)}
            <CollapseButton aria-label="Свернуть ленту"><svg width="8" height="5" viewBox="0 0 8 5"><path d="M4 0l4 5H0z" fill="#20252b" /></svg></CollapseButton>
          </MenuRow>
        </HeaderRows>
      </Header>

      <Ribbon>
        <Group $w={371}>
          <GroupBody>
            <Tool $w={77}>{icoLine}{label("Отрезок")}<Down /></Tool>
            <Tool $w={79}>{icoPoly}{label("Полилиния")}<Down /></Tool>
            <Tool $w={52}>{icoCircle}{label("Круг")}<Down /></Tool>
            <Tool $w={34}>{icoArc}{label("Дуга")}<Down /></Tool>
            <Smalls items={drawSmall} cols="24px 14px 26px 26px 26px" ml={7} />
          </GroupBody>
          <GroupTitle>Черчение</GroupTitle>
        </Group>
        <Group $w={511}>
          <GroupBody>
            <Tool $w={92}>{icoMove}{label("Перенести")}<Down /></Tool>
            <Tool $w={84}>{icoCopy}{label("Копировать")}<Down /></Tool>
            <Tool $w={84}>{icoStretch}{label("Растянуть")}<Down /></Tool>
            <Tool $w={90}>{icoFillet}{label("Сопряжение")}<Down /></Tool>
            <Smalls items={editSmall} cols="25px 16px 22px 30px" ml={3} />
            <Tool $w={54}>{icoErase}{label("Стереть")}</Tool>
          </GroupBody>
          <GroupTitle>Изменить</GroupTitle>
        </Group>
        <Group $w={176}>
          <GroupBody>
            <Tool $w={131}>{icoMtext}{label("Многострочный", "текст")}</Tool>
            <Smalls items={annoSmall} cols="27px 11px" />
          </GroupBody>
          <GroupTitle>Аннотации</GroupTitle>
        </Group>
        <Group $w={319}>
          <GroupBody>
            <Tool $w={78}>{icoLayerProps}<ToolText><span>Свойства</span><span>слоя</span></ToolText></Tool>
            <LayerBox>
              <LayerGrid>
                {badges.map((_, i) => <Small key={i} aria-label={`Слой: команда ${i + 1}`}><LayerIcon i={i} /></Small>)}
              </LayerGrid>
              <Combo $w={208} $ml={2}>
                <I w={65} h={18}>
                  <circle cx="7" cy="7" r="5" fill={Y} stroke="none" /><F d="M5 10h5v5H5z" c={Y} />
                  <circle cx="23" cy="9" r="3.500" fill={Y} stroke="none" /><circle cx="23" cy="9" r="6" stroke={Y} strokeWidth="2.500" strokeDasharray="2 2.700" />
                  <path d="M34 9V5c0-4 7-4 7 0v4" stroke={B} strokeWidth="1.800" /><F d="M38 9h9v7h-9z" c={B} /><path d="M42.500 11v3" />
                  <rect x="49.500" y="2.500" width="13" height="13" fill={W} stroke="#111" />
                </I>
                <select aria-label="Текущий слой"><option>GP_B1</option></select>
                <Down w={8} h={4} />
              </Combo>
            </LayerBox>
          </GroupBody>
          <GroupTitle>Слой</GroupTitle>
        </Group>
        <TallTool $w={38}>{icoBlock}{label("Блок")}<Down w={4} /></TallTool>
        <TallTool $w={68}>{icoPalette}{label("Свойства")}<Down w={4} /></TallTool>
        <TallTool $w={68} $pr={5}>{icoPaste}{label("Буфер", "обмена")}</TallTool>
      </Ribbon>

      <Main>
        <Left>
          <WorkRow>
            <DocColumn>
              <DocTabs>
                <TabMenu aria-label="Список документов"><Down w={8} h={7} /></TabMenu>
                <DocTab><Dwg /><span>Чертеж1.dwg</span></DocTab>
                <DocTab><Dwg /><span>Чертеж1.dwg*</span></DocTab>
                <DocTab $on><Dwg /><span>Без имени0.dwg*</span><Cross s={10} w={2.4} /></DocTab>
                <NewTab aria-label="Новый документ"><I w={15} h={11}><F d="M0 0h11l4 3v8H0z" c={W} /><F d="M12 0h3v2z" c={B} /><path d="M7.500 3v6M4.500 6h6" stroke={B} /></I></NewTab>
              </DocTabs>
              <Canvas>
                <Drawing />
                <CanvasControls>
                  <button aria-label="Свернуть окно"><I s={11}><path d="M0 9h10" strokeWidth="2.500" /></I></button>
                  <button aria-label="Восстановить окно"><I s={11}><path d="M3 1h7v7M1 4h6v6H1z" strokeWidth="1.700" /></I></button>
                  <button aria-label="Закрыть окно"><Cross s={10} w={2.4} /></button>
                </CanvasControls>
              </Canvas>
              <LayoutTabs>
                <LayoutTab $w={14} aria-label="Показать список"><svg width="9" height="5" viewBox="0 0 8 5"><path d="M4 0l4 5H0z" fill={W} /></svg></LayoutTab>
                <LayoutTab $w={14} aria-label="Первый"><I w={8} h={10}><F d="M8 0v10L2 5z" c="#a5adb8" /><path d="M1 0v10" stroke="#a5adb8" /></I></LayoutTab>
                <LayoutTab $w={14} aria-label="Предыдущий"><I w={8} h={10}><F d="M7 0v10L2 5z" c="#a5adb8" /></I></LayoutTab>
                <LayoutTab $w={14} aria-label="Следующий"><I w={8} h={10}><F d="M1 0v10l5-5z" c="#a5adb8" /></I></LayoutTab>
                <LayoutTab $w={14} aria-label="Последний"><I w={8} h={10}><F d="M0 0v10l6-5z" c="#a5adb8" /><path d="M7 0v10" stroke="#a5adb8" /></I></LayoutTab>
                <LayoutTab $w={59} $on>Модель</LayoutTab>
                {["A4", "A3", "A2", "A1"].map((t) => <LayoutTab key={t} $w={35}>{t}</LayoutTab>)}
                <LayoutTab $w={29}>+</LayoutTab>
              </LayoutTabs>
            </DocColumn>
            <SideBar>
              <Grip /><Grip />
              {side.map((ic, i) => <SideButton key={i} aria-label={`Инструмент ${i + 1}`}>{ic}</SideButton>)}
            </SideBar>
          </WorkRow>
          <Command>
            <CommandGrip><Cross s={9} c="#717781" /></CommandGrip>
            <CommandBody>
              <History>
                <Log>
                  <p>Команда:</p>
                  <p>** РАСТЯНУТЬ **</p>
                  <p>Точка растягивания или [Базовая точка/Копировать/ОТменить/выХод]:</p>
                  <p>Команда:</p>
                </Log>
                <Scroll $w={15}>
                  <ScrollButton aria-label="Вверх"><Chevron up /></ScrollButton>
                  <Track $before={82} $size={18}><i /></Track>
                  <ScrollButton aria-label="Вниз"><Chevron /></ScrollButton>
                </Scroll>
              </History>
              <Prompt>Команда:<input type="text" /></Prompt>
            </CommandBody>
          </Command>
        </Left>

        <Props>
          <PropsHead><h2>Свойства</h2><button aria-label="Закрыть панель"><Cross s={10} w={2.4} /></button></PropsHead>
          <PropsBody>
            <ObjectRow>
              <ObjectSelect>
                <select aria-label="Объект"><option>Инженерная сеть</option></select>
                <Down w={9} h={5} />
              </ObjectSelect>
              <ObjectButton aria-label="Переключить PICKADD"><I s={15}><rect x="1" y="1" width="13" height="13" /><path d="M6 4.500h2V11" stroke={Y} /></I></ObjectButton>
              <ObjectButton aria-label="Выбрать объекты"><I s={17}><path d="M7 6c-7 2-7 9 0 8" stroke="#c0c6cd" strokeWidth="1.500" /><F d="M6 1h9v9H6z" c={B} /><path d="M10 7v8l2-2 1 3 1-1-1-3h3z" fill="#222" strokeWidth="1" /></I></ObjectButton>
              <ObjectButton aria-label="Быстрый выбор"><I s={17}><path d="M2 2v11l2-2 2 3 2-1-2-3h3zM4 3l6 5" strokeWidth="1.200" /><F d="M13 2l-5 7h3l-2 5 7-7h-3l3-4z" c={Y} /></I></ObjectButton>
            </ObjectRow>
            <PropsList>
              <Sections>
                <Head>Общие</Head>
                <SectionGap />
                <Head>GEONIUM ZWCAD - Геометрия</Head>
                <Rows rows={geometry} />
                <Head>GEONIUM ZWCAD - Данные</Head>
                <Rows rows={data} />
                <Head>GEONIUM ZWCAD - Отображение</Head>
                <Rows rows={display} />
              </Sections>
              <Scroll $w={15}>
                <ScrollButton aria-label="Вверх"><Chevron up /></ScrollButton>
                <Track $before={0} $size={81}><i /></Track>
                <ScrollButton aria-label="Вниз"><Chevron /></ScrollButton>
              </Scroll>
            </PropsList>
          </PropsBody>
        </Props>
      </Main>

      <Status>
        <Coords>36864.23, 29202.52, 0.00</Coords>
        <Toggles>{toggles.map(([t, ic, on]) => <Toggle key={t} aria-label={t} $on={on}>{ic}</Toggle>)}</Toggles>
        <StatusTools>
          <StatusButton $w={22} aria-label="Масштаб аннотаций"><AnnoMark /></StatusButton>
          <ScaleButton>1:1<Down w={9} h={5} /></ScaleButton>
          <StatusButton $w={22} aria-label="Видимость аннотаций"><AnnoMark><circle cx="14" cy="12" r="2.500" fill={Y} stroke="none" /><Dot x={14} y={15.5} r={1.2} c={Y} /></AnnoMark></StatusButton>
          <StatusButton $w={22} aria-label="Автомасштаб"><AnnoMark><path d="M0 4h5M2 1l5 6" stroke={L} strokeWidth="2" /></AnnoMark></StatusButton>
          <StatusButton $w={22} aria-label="Настройки"><I><circle cx="8" cy="8" r="4.200" stroke={B} strokeWidth="2" /><circle cx="8" cy="8" r="6.200" stroke={B} strokeWidth="2.500" strokeDasharray="2.400 2.470" /></I></StatusButton>
          <StatusButton $w={22} aria-label="Полный экран"><I s={15}><path d="M1 5V1h4M10 1h4v4M14 10v4h-4M5 14H1v-4M2 2l4 4M13 2L9 6M2 13l4-4M13 13L9 9" /></I></StatusButton>
        </StatusTools>
      </Status>
    </Shell>
  );
}
